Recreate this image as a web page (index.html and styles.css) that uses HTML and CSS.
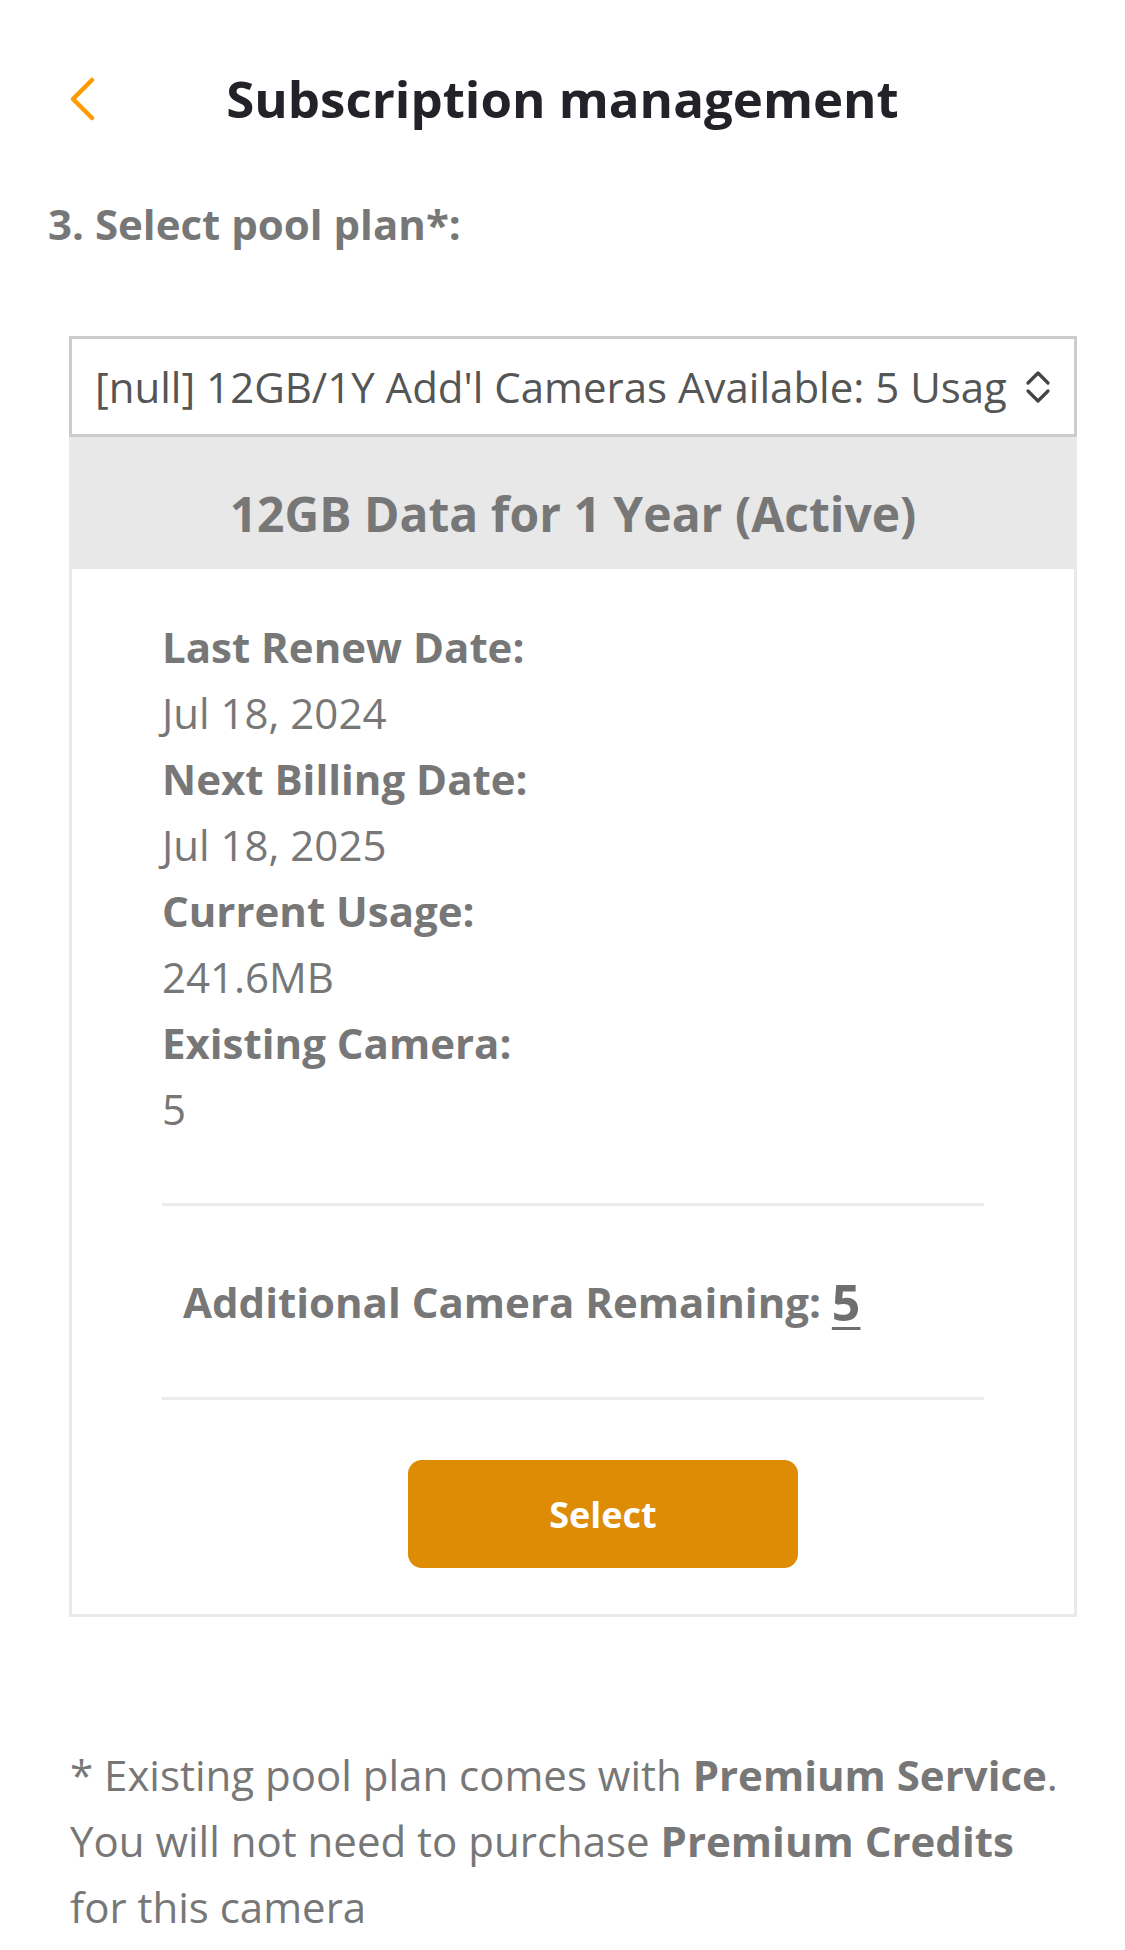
FILE: index.html
```html
<!DOCTYPE html>
<html lang="en">
<head>
<meta charset="utf-8">
<title>Subscription management</title>
<link rel="stylesheet" href="styles.css">
</head>
<body>
<div class="page">
  <header class="topbar">
    <span class="back" aria-label="Back">
      <svg width="30" height="46" viewBox="0 0 30 46"><polyline points="24,4 5,23 24,42" fill="none" stroke="#ff9a00" stroke-width="4.5" stroke-linecap="round" stroke-linejoin="round"/></svg>
    </span>
    <h1 class="title">Subscription management</h1>
  </header>

  <h2 class="step">3. Select pool plan*:</h2>

  <div class="plan">
    <div class="picker">
      <span class="picker-text">[null] 12GB/1Y Add'l Cameras Available: 5 Usage: 241.6MB</span>
      <svg class="picker-icon" width="28" height="34" viewBox="0 0 28 34"><polyline points="4,13 14,3 24,13" fill="none" stroke="#444" stroke-width="3.2" stroke-linecap="round" stroke-linejoin="round"/><polyline points="4,21 14,31 24,21" fill="none" stroke="#444" stroke-width="3.2" stroke-linecap="round" stroke-linejoin="round"/></svg>
    </div>
    <div class="card">
      <div class="card-head">12GB Data for 1 Year (Active)</div>
      <div class="card-body">
        <dl class="facts">
          <dt>Last Renew Date:</dt>
          <dd>Jul 18, 2024</dd>
          <dt>Next Billing Date:</dt>
          <dd>Jul 18, 2025</dd>
          <dt>Current Usage:</dt>
          <dd>241.6MB</dd>
          <dt>Existing Camera:</dt>
          <dd>5</dd>
        </dl>
        <div class="remaining">Additional Camera Remaining: <span class="remaining-num">5</span></div>
        <button class="select-btn" type="button">Select</button>
      </div>
    </div>
  </div>

  <p class="note">* Existing pool plan comes with <b>Premium Service</b>. You will not need to purchase <b>Premium Credits</b> for this camera</p>
</div>
</body>
</html>
```

FILE: styles.css
```css
* { box-sizing: border-box; }

html, body {
  margin: 0;
  padding: 0;
  background: #ffffff;
}

body {
  font-family: "Open Sans", "Noto Sans", sans-serif;
  color: #777777;
  width: 1125px;
}

.page {
  padding: 0 48px;
}

.topbar {
  position: relative;
  padding-top: 63px;
  display: flex;
  justify-content: center;
}

.back {
  position: absolute;
  left: 20px;
  top: 76px;
  width: 30px;
  height: 46px;
  display: block;
}
.back svg { display: block; }

.title {
  margin: 0;
  font-size: 51px;
  font-weight: 700;
  color: #222328;
  line-height: 70px;
}

.step {
  margin: 62px 0 0 0;
  font-size: 42px;
  font-weight: 700;
  line-height: 58px;
  color: #777777;
}

.plan {
  margin: 83px 0 0 21px;
}

.picker {
  height: 101px;
  border: 3px solid #cccccc;
  display: flex;
  align-items: center;
  padding: 0 22px 0 23px;
  background: #ffffff;
}

.picker-text {
  flex: 1;
  min-width: 0;
  overflow: hidden;
  white-space: nowrap;
  font-size: 42px;
  font-weight: 400;
  color: #555555;
  margin-right: 15px;
}

.picker-icon { display: block; flex: none; }

.card {
  border: 3px solid #e9e9e9;
  border-top: none;
  background: #ffffff;
}

.card-head {
  background: #e8e8e8;
  height: 132px;
  display: flex;
  align-items: center;
  justify-content: center;
  font-size: 48px;
  font-weight: 700;
  color: #777777;
  padding-top: 20px;
}

.card-body {
  padding: 45px 90px 46px 90px;
}

.facts {
  margin: 0;
  font-size: 42px;
  line-height: 66px;
  color: #777777;
  padding-bottom: 61px;
  border-bottom: 3px solid #ebebeb;
}
.facts dt { font-weight: 700; margin: 0; }
.facts dd { font-weight: 400; margin: 0; }

.remaining {
  padding: 0 21px;
  height: 194px;
  display: flex;
  align-items: center;
  font-size: 42px;
  font-weight: 700;
  color: #777777;
  border-bottom: 3px solid #ebebeb;
  white-space: pre;
}

.remaining-num {
  font-size: 50px;
  text-decoration: underline;
  text-decoration-thickness: 3px;
  text-underline-offset: 6px;
  color: #6f6f6f;
}

.select-btn {
  display: block;
  margin: 60px 0 0 246px;
  width: 390px;
  height: 108px;
  border: none;
  border-radius: 14px;
  background: #de8b06;
  color: #ffffff;
  font-family: "Open Sans", "Noto Sans", sans-serif;
  font-size: 36px;
  font-weight: 700;
}

.note {
  margin: 125px 0 0 22px;
  font-size: 42px;
  line-height: 66px;
  color: #777777;
}
.note b { font-weight: 700; }
```
